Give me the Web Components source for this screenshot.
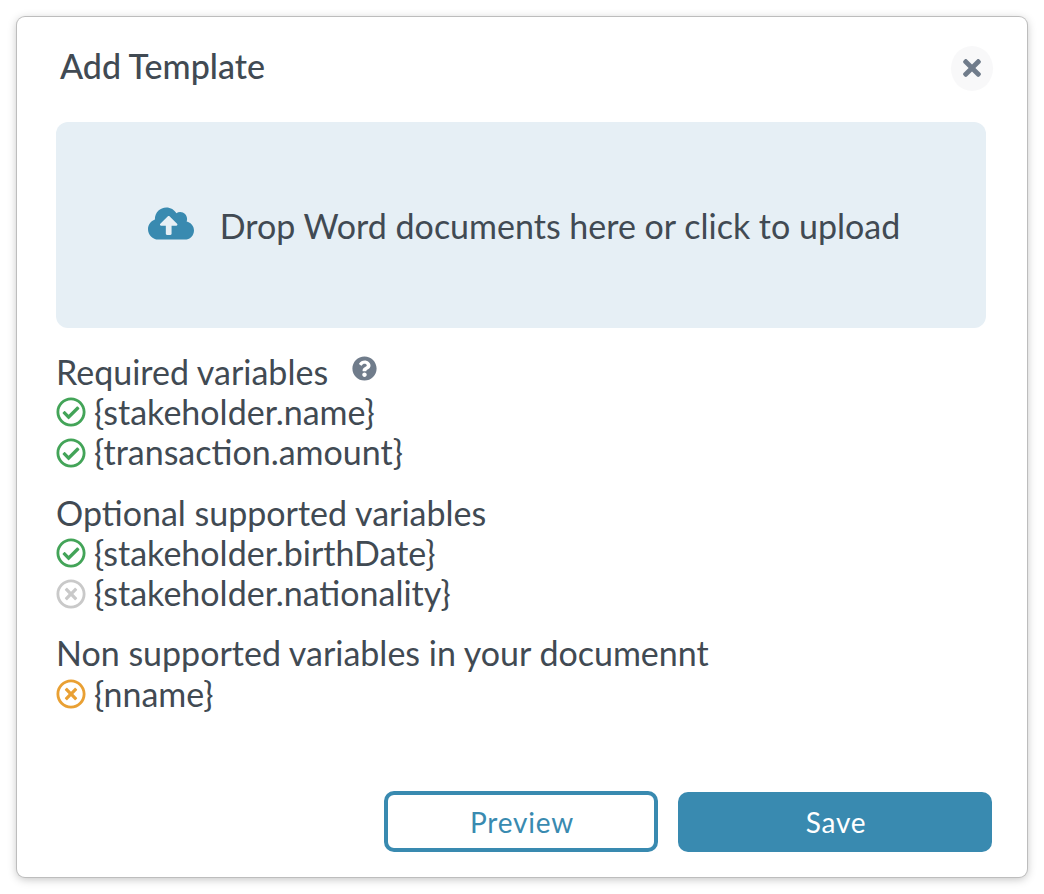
<!DOCTYPE html>
<html>
<head>
<meta charset="utf-8">
<title>Add Template</title>
<style>
  html, body { margin: 0; background: #fff; }
  body { font-family: Lato, "Liberation Sans", sans-serif; color: #414a53; }
</style>
</head>
<body>
<add-template-dialog></add-template-dialog>

<script>
const CHECK_CIRCLE = "M256 8C119.033 8 8 119.033 8 256s111.033 248 248 248 248-111.033 248-248S392.967 8 256 8zm0 48c110.532 0 200 89.451 200 200 0 110.532-89.451 200-200 200-110.532 0-200-89.451-200-200 0-110.532 89.451-200 200-200m140.204 130.267l-22.536-22.718c-4.667-4.705-12.265-4.736-16.970-.068L215.346 303.697l-59.792-60.277c-4.667-4.705-12.265-4.736-16.970-.069l-22.719 22.536c-4.705 4.667-4.736 12.265-.068 16.971l90.781 91.516c4.667 4.705 12.265 4.736 16.970.068l172.589-171.204c4.704-4.668 4.734-12.266.067-16.971z";
const TIMES_CIRCLE = "M256 8C119 8 8 119 8 256s111 248 248 248 248-111 248-248S393 8 256 8zm0 448c-110.500 0-200-89.500-200-200S145.500 56 256 56s200 89.500 200 200-89.500 200-200 200zm101.800-262.200L295.600 256l62.200 62.200c4.700 4.700 4.700 12.300 0 17l-22.600 22.600c-4.700 4.700-12.300 4.700-17 0L256 295.600l-62.200 62.200c-4.700 4.700-12.300 4.700-17 0l-22.600-22.600c-4.700-4.700-4.700-12.300 0-17l62.200-62.200-62.200-62.200c-4.700-4.700-4.700-12.300 0-17l22.600-22.600c4.700-4.700 12.300-4.700 17 0l62.200 62.200 62.200-62.200c4.700-4.700 12.300-4.700 17 0l22.600 22.600c4.700 4.700 4.700 12.300 0 17z";

// small status icon used in front of each variable
class VarItem extends HTMLElement {
  static ICONS = {
    ok: { color: "#43a458", path: CHECK_CIRCLE },
    off: { color: "#c9c9c9", path: TIMES_CIRCLE },
    bad: { color: "#e9a033", path: TIMES_CIRCLE },
  };

  constructor() {
    super();
    const def = VarItem.ICONS[this.getAttribute("state")] || VarItem.ICONS.ok;
    const shadow = this.attachShadow({ mode: "open" });
    shadow.innerHTML = `
      <style>
        :host { display:flex; align-items:center; gap:8px; height:40.3px; font-size:34px; }
        svg { width:30px; height:30px; flex:none; fill:${def.color}; margin-top:2px; margin-left:-.5px; }
        span { margin-left:.5px; }
      </style>
      <svg viewBox="0 0 512 512"><path d="${def.path}"/></svg>
      <span><slot></slot></span>
    `;
  }
}
customElements.define("var-item", VarItem);

// heading + list of variables
class VarGroup extends HTMLElement {
  constructor() {
    super();
    const shadow = this.attachShadow({ mode: "open" });
    shadow.innerHTML = `
      <style>
        :host { display:block; }
        .head { display:flex; align-items:center; gap:24px; height:40.3px; font-size:34px; }
        .list { display:block; }
      </style>
      <div class="head"><span>${this.getAttribute("label")}</span><slot name="hint"></slot></div>
      <div class="list"><slot></slot></div>
    `;
  }
}
customElements.define("var-group", VarGroup);

class UploadZone extends HTMLElement {
  constructor() {
    super();
    const shadow = this.attachShadow({ mode: "open" });
    shadow.innerHTML = `
      <style>
        :host { display:flex; align-items:center; justify-content:center; gap:26px; height:206px; padding-left:6px; box-sizing:border-box; border-radius:12px; background:#e6eff5; font-size:34px; cursor:pointer; }
        svg { width:46px; height:37px; flex:none; margin-top:-3px; fill:#398ab0; }
      </style>
      <svg viewBox="0 0 640 512"><path d="M537.6 226.6c4.100-10.700 6.400-22.400 6.400-34.600 0-53-43-96-96-96-19.700 0-38.100 6-53.300 16.200C367 64.200 315.300 32 256 32c-88.400 0-160 71.600-160 160 0 2.700.1 5.400.2 8.100C40.200 219.800 0 273.200 0 336c0 79.500 64.500 144 144 144h368c70.700 0 128-57.300 128-128 0-61.900-44-113.600-102.400-125.400zM393.400 288H328v112c0 8.800-7.200 16-16 16h-48c-8.800 0-16-7.200-16-16V288h-65.400c-14.300 0-21.400-17.200-11.300-27.300l105.400-105.400c6.200-6.200 16.400-6.200 22.600 0l105.400 105.400c10.100 10.100 2.900 27.300-11.300 27.300z"/></svg>
      <span><slot></slot></span>
    `;
  }
}
customElements.define("upload-zone", UploadZone);

class ActionButton extends HTMLElement {
  constructor() {
    super();
    const shadow = this.attachShadow({ mode: "open" });
    shadow.innerHTML = `
      <style>
        :host { display:flex; align-items:center; justify-content:center; box-sizing:border-box; height:60px; padding-left:2px; border-radius:10px; font-size:28px; letter-spacing:.8px; cursor:pointer; }
        :host([kind="primary"]) { width:314px; background:#398ab0; color:#fff; }
        :host([kind="outline"]) { width:274px; height:61px; border:4px solid #398ab0; color:#398ab0; background:#fff; margin-top:-1px; }
      </style>
      <slot></slot>
    `;
  }
}
customElements.define("action-button", ActionButton);

class AddTemplateDialog extends HTMLElement {
  constructor() {
    super();
    const shadow = this.attachShadow({ mode: "open" });
    shadow.innerHTML = `
      <style>
        :host { display:block; padding:17px; }
        .dialog { box-sizing:border-box; width:1010px; height:860px; display:flex; flex-direction:column; background:#fff; border-radius:8px; box-shadow:0 0 0 1px #bdbdbd, 0 2px 10px rgba(0,0,0,.26); padding:27px 35px 25px 39px; }
        .top { display:flex; justify-content:space-between; align-items:center; height:46px; margin-right:-1px; }
        h1 { margin:-4px 0 0 4px; font-size:34px; font-weight:500; color:#414a53; }
        .close { width:42px; height:45px; border-radius:50%; background:#f8f8f9; display:flex; align-items:center; justify-content:center; margin-top:2px; }
        .close svg { width:18px; height:26px; fill:#707c8b; }
        upload-zone { margin-top:32px; width:930px; }
        .groups { display:flex; flex-direction:column; gap:20px; margin-top:23px; }
        .actions { margin-top:auto; display:flex; justify-content:flex-end; gap:20px; }
      </style>
      <div class="dialog">
        <div class="top">
          <h1>Add Template</h1>
          <div class="close"><svg viewBox="0 0 352 512"><path d="M242.720 256l100.070-100.070c12.280-12.280 12.280-32.190 0-44.480l-22.240-22.240c-12.280-12.280-32.190-12.280-44.480 0L176 189.280 75.930 89.210c-12.280-12.280-32.190-12.280-44.480 0L9.210 111.450c-12.280 12.280-12.280 32.190 0 44.480L109.280 256 9.210 356.070c-12.280 12.280-12.280 32.190 0 44.480l22.240 22.240c12.280 12.280 32.200 12.280 44.480 0L176 322.720l100.070 100.070c12.280 12.280 32.200 12.280 44.480 0l22.240-22.240c12.280-12.280 12.280-32.190 0-44.480L242.720 256z"/></svg></div>
        </div>
        <upload-zone>Drop Word documents here or click to upload</upload-zone>
        <div class="groups">
          <var-group label="Required variables">
            <svg slot="hint" style="width:25px;height:25px;margin-top:-5px;fill:#707c8b" viewBox="0 0 512 512"><path d="M504 256c0 136.997-111.043 248-248 248S8 392.997 8 256C8 119.083 119.043 8 256 8s248 111.083 248 248zM262.655 90c-54.497 0-89.255 22.957-116.549 63.758-3.536 5.286-2.353 12.415 2.715 16.258l34.699 26.310c5.205 3.947 12.621 3.008 16.665-2.122 17.864-22.658 30.113-35.797 57.303-35.797 20.429 0 45.698 13.148 45.698 32.958 0 14.976-12.363 22.667-32.534 33.976C247.128 238.528 216 254.941 216 296v4c0 6.627 5.373 12 12 12h56c6.627 0 12-5.373 12-12v-1.333c0-28.462 83.186-29.647 83.186-106.667 0-58.002-60.165-102-116.531-102zM256 338c-25.365 0-46 20.635-46 46 0 25.364 20.635 46 46 46s46-20.636 46-46c0-25.365-20.635-46-46-46z"/></svg>
            <var-item state="ok">{stakeholder.name}</var-item>
            <var-item state="ok">{transaction.amount}</var-item>
          </var-group>
          <var-group label="Optional supported variables">
            <var-item state="ok">{stakeholder.birthDate}</var-item>
            <var-item state="off">{stakeholder.nationality}</var-item>
          </var-group>
          <var-group label="Non supported variables in your documennt">
            <var-item state="bad">{nname}</var-item>
          </var-group>
        </div>
        <div class="actions">
          <action-button kind="outline">Preview</action-button>
          <action-button kind="primary">Save</action-button>
        </div>
      </div>
    `;
  }
}
customElements.define("add-template-dialog", AddTemplateDialog);
</script>
</body>
</html>
